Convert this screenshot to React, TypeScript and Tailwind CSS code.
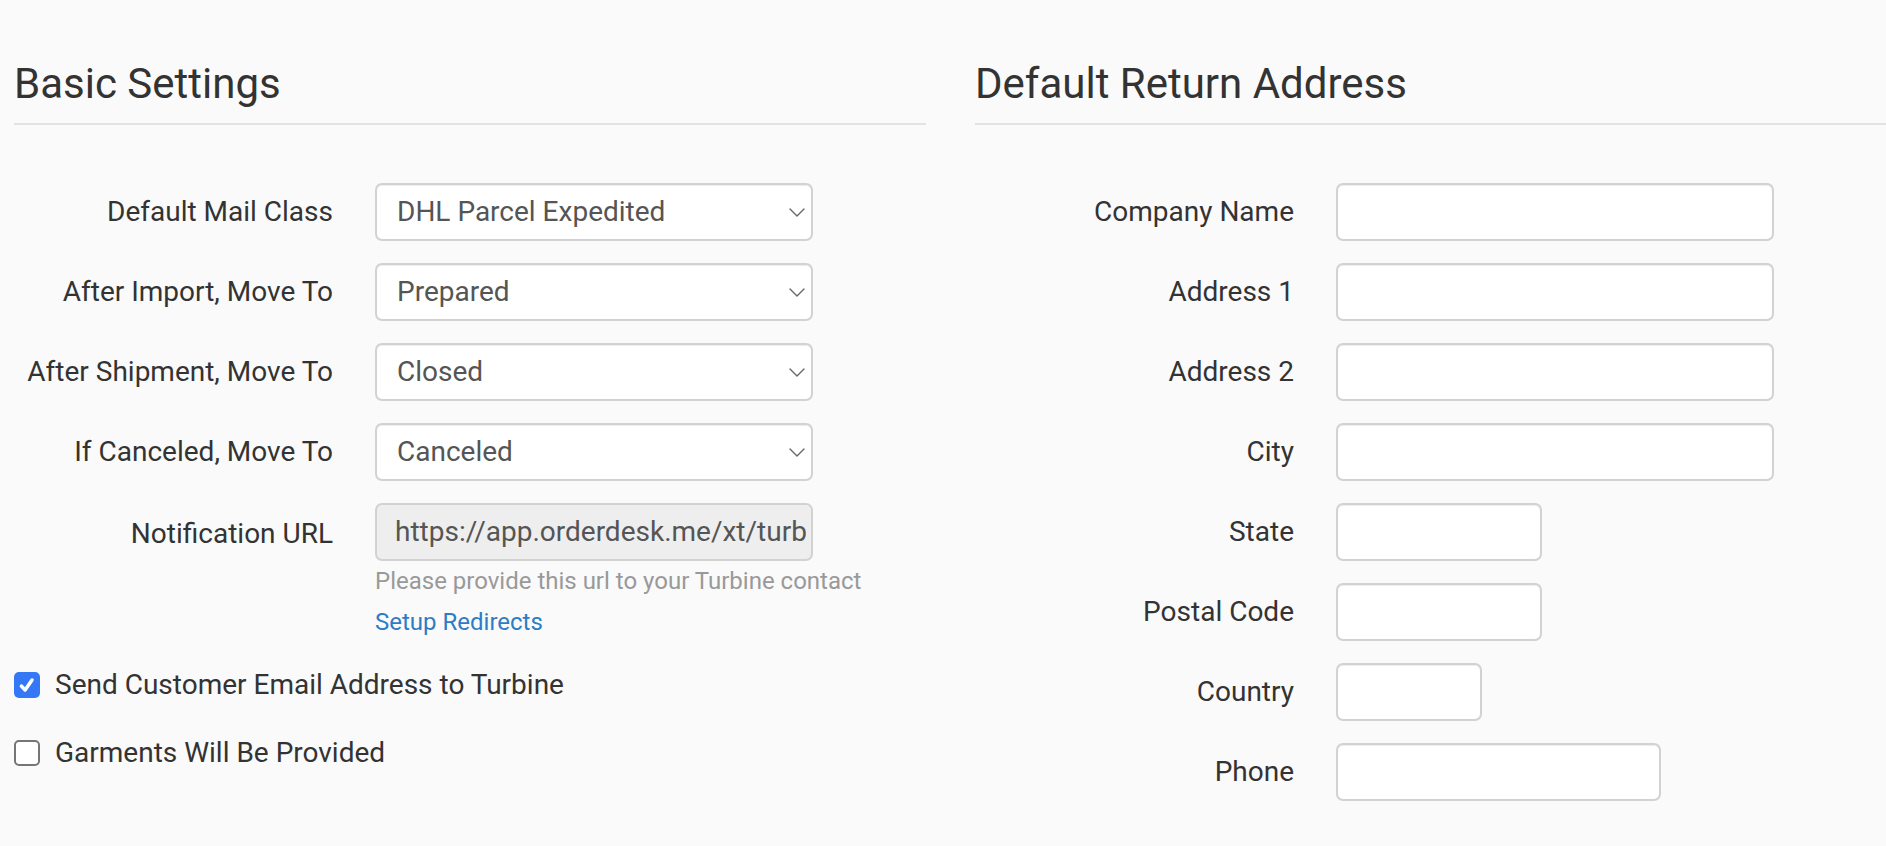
const leftRows = [
  { label: 'Default Mail Class', value: 'DHL Parcel Expedited' },
  { label: 'After Import, Move To', value: 'Prepared' },
  { label: 'After Shipment, Move To', value: 'Closed' },
  { label: 'If Canceled, Move To', value: 'Canceled' },
];

const addressRows = [
  { label: 'Company Name', width: 'w-[438px]' },
  { label: 'Address 1', width: 'w-[438px]' },
  { label: 'Address 2', width: 'w-[438px]' },
  { label: 'City', width: 'w-[438px]' },
  { label: 'State', width: 'w-[206px]' },
  { label: 'Postal Code', width: 'w-[206px]' },
  { label: 'Country', width: 'w-[146px]' },
  { label: 'Phone', width: 'w-[325px]' },
];

function SectionTitle({ title }: { title: string }) {
  return (
    <div className="border-b-2 border-[#e3e3e3] pb-[18px]">
      <h2 className="text-[42px] leading-none text-[#333]">{title}</h2>
    </div>
  );
}

function FieldRow({ label, children }: { label: string; children: React.ReactNode }) {
  return (
    <div className="mb-[22px] flex h-[58px] items-center">
      <label className="w-[319px] shrink-0 whitespace-nowrap text-right text-[28px] text-[#333]">{label}</label>
      <div className="ml-[42px]">{children}</div>
    </div>
  );
}

function Checkbox({ checked, label }: { checked: boolean; label: string }) {
  return (
    <div className="flex h-[42px] items-center">
      {checked ? (
        <span className="flex h-[26px] w-[26px] items-center justify-center rounded-[5px] bg-[#3478f6]">
          <svg viewBox="0 0 16 16" className="h-[20px] w-[20px]" fill="none" stroke="white" strokeWidth="2.8" strokeLinecap="round" strokeLinejoin="round">
            <path d="M3.5 8.8l3 3.2 5.5-8" />
          </svg>
        </span>
      ) : (
        <span className="h-[26px] w-[26px] rounded-[5px] border-2 border-[#767676] bg-white" />
      )}
      <span className="ml-[15px] text-[28px] text-[#333]">{label}</span>
    </div>
  );
}

export default function App() {
  return (
    <div className="min-h-[846px] w-[1886px] overflow-hidden bg-[#fafafa] pt-[63px] font-['Roboto',sans-serif]">
      <div className="flex">
        <section className="ml-[14px] w-[912px] shrink-0">
          <SectionTitle title="Basic Settings" />
          <div className="mt-[58px]">
            {leftRows.map((row) => (
              <FieldRow key={row.label} label={row.label}>
                <div className="relative flex h-[58px] w-[438px] items-center rounded-[7px] border-2 border-[#d2d2d2] bg-white pl-[20px] text-[28px] text-[#555] shadow-[inset_0_1px_1px_rgba(0,0,0,0.075)]">
                  {row.value}
                  <svg viewBox="0 0 16 9" className="absolute right-[6px] top-[23px] h-[9px] w-[16px]" fill="none" stroke="#666" strokeWidth="1.4" strokeLinecap="round" strokeLinejoin="round">
                    <path d="M1 1l7 7 7-7" />
                  </svg>
                </div>
              </FieldRow>
            ))}
            <div className="flex">
              <label className="w-[319px] shrink-0 pt-[10px] text-right text-[28px] text-[#333]">Notification URL</label>
              <div className="ml-[42px] w-[438px]">
                <div className="flex h-[58px] items-center rounded-[7px] border-2 border-[#d2d2d2] bg-[#eeeeee] pl-[18px] pr-[5px] text-[28px] text-[#555]">
                  <span className="overflow-hidden whitespace-nowrap">https://app.orderdesk.me/xt/turbine</span>
                </div>
                <p className="mt-[5px] whitespace-nowrap text-[24px] leading-[30px] text-[#999]">
                  Please provide this url to your Turbine contact
                </p>
                <a className="mt-[11px] block text-[24px] leading-[30px] text-[#2d7dc5]">Setup Redirects</a>
              </div>
            </div>
            <div className="mt-[27px] flex flex-col gap-[26px]">
              <Checkbox checked label="Send Customer Email Address to Turbine" />
              <Checkbox checked={false} label="Garments Will Be Provided" />
            </div>
          </div>
        </section>

        <section className="ml-[49px] w-[960px] shrink-0">
          <SectionTitle title="Default Return Address" />
          <div className="mt-[58px]">
            {addressRows.map((row) => (
              <FieldRow key={row.label} label={row.label}>
                <div className={`${row.width} h-[58px] rounded-[7px] border-2 border-[#d2d2d2] bg-white shadow-[inset_0_1px_1px_rgba(0,0,0,0.075)]`} />
              </FieldRow>
            ))}
          </div>
        </section>
      </div>
    </div>
  );
}
